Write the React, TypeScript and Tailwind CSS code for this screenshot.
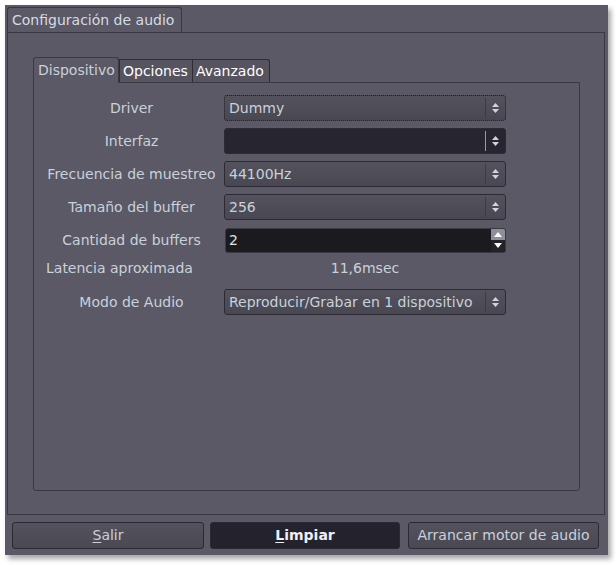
import React from "react";

const font = { fontFamily: '"DejaVu Sans", "Liberation Sans", sans-serif' };

const Arrows = ({ color = "#cfd3dc" }: { color?: string }) => (
  <svg width="9" height="12" viewBox="0 0 9 12">
    <path d="M4.5 1 L8 5 L1 5 Z" fill={color} />
    <path d="M4.5 11 L8 7 L1 7 Z" fill={color} />
  </svg>
);

type ComboProps = {
  value?: string;
  dark?: boolean;
  focused?: boolean;
};

const Combo = ({ value, dark, focused }: ComboProps) => (
  <div
    className={`flex h-[26px] w-[282px] items-center rounded-[3px] border ${
      focused ? "border-dotted border-[#1f1f25]" : "border-[#2c2b33]"
    } ${
      dark
        ? "bg-[#272630]"
        : "bg-gradient-to-b from-[#53525d] to-[#494852]"
    }`}
  >
    <span className="flex-1 truncate pl-[4px] text-[14px] text-[#c9d1db]">
      {value}
    </span>
    <span
      className={`h-[20px] w-px ${dark ? "bg-[#9a9aa4]" : "bg-[#3d3c45]"}`}
    />
    <span className="flex w-[19px] items-center justify-center">
      <Arrows />
    </span>
  </div>
);

const Spin = ({ value }: { value: string }) => (
  <div className="ml-px flex h-[25px] w-[281px] items-stretch rounded-[3px] border border-[#3b3a43] bg-[#1b1b1f]">
    <span className="flex flex-1 items-center pl-[3px] text-[14px] text-[#dfe3ea]">
      {value}
    </span>
    <span className="flex w-[14px] flex-col">
      <span className="flex flex-1 items-center justify-center rounded-tr-[2px] bg-[#8d8f9b]">
        <svg width="8" height="5" viewBox="0 0 8 5">
          <path d="M4 0 L8 5 L0 5 Z" fill="#ffffff" />
        </svg>
      </span>
      <span className="flex flex-1 items-center justify-center bg-[#222227]">
        <svg width="8" height="5" viewBox="0 0 8 5">
          <path d="M4 5 L8 0 L0 0 Z" fill="#ffffff" />
        </svg>
      </span>
    </span>
  </div>
);

const Row = ({
  label,
  children,
  className = "h-[26px] mb-[7px]",
}: {
  label: string;
  children: React.ReactNode;
  className?: string;
}) => (
  <div className={`flex items-center ${className}`}>
    <span className="w-[173px] whitespace-nowrap text-center text-[14px] text-[#c9d1db]">
      {label}
    </span>
    <span className="ml-[6px] flex">{children}</span>
  </div>
);

const Button = ({
  children,
  dark,
  className = "",
}: {
  children: React.ReactNode;
  dark?: boolean;
  className?: string;
}) => (
  <div
    className={`flex h-[27px] items-center justify-center rounded-[3px] border border-[#2b2a32] text-[14px] ${
      dark
        ? "bg-[#24232d] font-bold text-[#eef0f4]"
        : "bg-gradient-to-b from-[#53525d] to-[#4a4953] text-[#c9d1db]"
    } ${className}`}
  >
    {children}
  </div>
);

export default function App() {
  return (
    <div className="h-[565px] w-[616px] bg-white pl-[5px] pt-[5px]" style={font}>
      <div className="flex h-[550px] w-[603px] flex-col bg-[#5a5965] shadow-[3px_4px_5px_rgba(0,0,0,0.35)]">
        {/* outer tab widget */}
        <div className="ml-[2px] mt-[2px] flex w-[598px] flex-col">
          <div className="flex h-[25px]">
            <div className="-mb-px flex w-[175px] items-center rounded-t-[3px] border border-b-0 border-[#3a3942] bg-[#5a5965] pl-[4px] text-[14px] text-[#d6dbe3]">
              Configuración de audio
            </div>
          </div>
          <div className="h-[483px] border border-[#3a3942] px-[25px] pt-[24px]">
            {/* inner tab widget */}
            <div className="flex h-[25px] items-end">
              <div className="-mb-px flex h-[26px] w-[86px] items-center rounded-t-[3px] border border-b-0 border-[#3a3942] bg-[#5a5965] pl-[4px] text-[14px] text-[#c9d1db]">
                Dispositivo
              </div>
              <div className="flex h-[23px] w-[74px] items-center border border-b-0 border-[#2e2d35] bg-[#55545f] pl-[3px] text-[14px] text-white">
                Opciones
              </div>
              <div className="flex h-[23px] w-[77px] items-center rounded-tr-[3px] border border-b-0 border-l-0 border-[#2e2d35] bg-[#55545f] pl-[3px] text-[14px] text-white">
                Avanzado
              </div>
            </div>
            <div className="h-[409px] w-[547px] rounded-b-[3px] border border-[#3a3942] pl-[11px] pt-[12px]">
              <Row label="Driver">
                <Combo value="Dummy" focused />
              </Row>
              <Row label="Interfaz">
                <Combo dark />
              </Row>
              <Row label="Frecuencia de muestreo">
                <Combo value="44100Hz" />
              </Row>
              <Row label="Tamaño del buffer">
                <Combo value="256" />
              </Row>
              <Row label="Cantidad de buffers">
                <Spin value="2" />
              </Row>
              <div className="mb-[12px] flex h-[17px] items-center">
                <span className="w-[173px] whitespace-nowrap pl-px text-[14px] text-[#c9d1db]">
                  Latencia aproximada
                </span>
                <span className="ml-[6px] w-[282px] text-center text-[14px] text-[#c9d1db]">
                  11,6msec
                </span>
              </div>
              <Row label="Modo de Audio">
                <Combo value="Reproducir/Grabar en 1 dispositivo" />
              </Row>
            </div>
          </div>
        </div>
        {/* bottom buttons */}
        <div className="ml-[7px] mt-[7px] flex">
          <Button className="w-[192px]">
            <span className="underline underline-offset-2">S</span>alir
          </Button>
          <Button dark className="ml-[6px] w-[190px]">
            <span className="underline underline-offset-2">L</span>impiar
          </Button>
          <Button className="ml-[8px] w-[191px]">Arrancar motor de audio</Button>
        </div>
      </div>
    </div>
  );
}
